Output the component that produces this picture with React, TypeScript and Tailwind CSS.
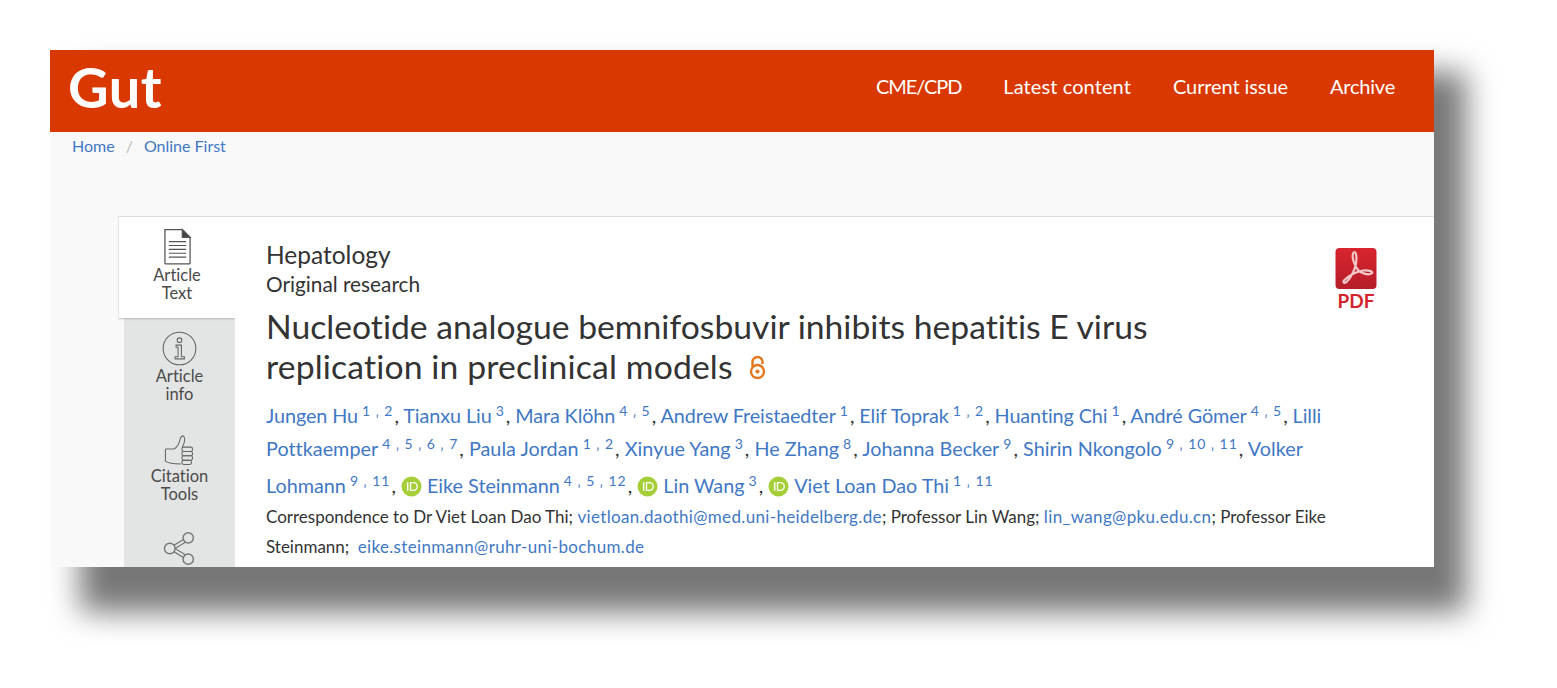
import React from "react";

const blue = "text-[#3f78c4]";
const mail = "text-[#3f78c4] tracking-[0.35px]";

function Sup({ t }: { t: string }) {
  return <sup className="text-[14px] leading-none relative top-[1px] align-super ml-[4px] mr-[1px] tracking-[1px]">{t}</sup>;
}

function Orcid() {
  return (
    <svg viewBox="0 0 22 22" className="inline-block w-[21px] h-[21px] align-[-4px] mr-[5px]">
      <circle cx="11" cy="11" r="10.5" fill="#a6ce39" />
      <path d="M7 6.5v9" stroke="#fff" strokeWidth="1.5" />
      <path d="M10 7h3a4 4 0 0 1 0 8h-3z" fill="none" stroke="#fff" strokeWidth="1.4" />
    </svg>
  );
}

function A({ n, s, id }: { n: string; s: string; id?: boolean }) {
  return (
    <>
      {id && <Orcid />}
      <span className={blue}>{n}</span>
      <span className={blue}><Sup t={s} /></span>
    </>
  );
}

function DocIcon() {
  return (
    <svg viewBox="0 0 30 38" className="w-[29px] h-[37px]" fill="none" stroke="#555" strokeWidth="1.3">
      <path d="M2 1.5h18l8 8v26.5a1 1 0 0 1-1 1H3a1 1 0 0 1-1-1z" />
      <path d="M20 1.5l8 8h-8z" fill="#444" />
      <path d="M6 14h18M6 18h18M6 22h18M6 26h18M6 30h18" strokeWidth="1.2" />
    </svg>
  );
}
function InfoIcon() {
  return (
    <svg viewBox="0 0 36 36" className="w-[35px] h-[35px]" fill="none" stroke="#666" strokeWidth="1.1">
      <circle cx="18" cy="18" r="16.8" />
      <circle cx="18" cy="9.5" r="2.4" />
      <path d="M14.5 14.5h5.5v12h3v2.2h-9.5v-2.2h3v-9.8h-2z" />
    </svg>
  );
}
function ThumbIcon() {
  return (
    <svg viewBox="0 0 30 32" className="w-[30px] h-[31px] ml-[-2px]" fill="none" stroke="#666" strokeWidth="1.1">
      <path d="M1 14.500h9c3-2 5-5.500 6-9.500.5-3 2.500-5 4-3.500 1.500 2 .5 7-1.500 11" />
      <path d="M1 14.500v12.500c3 2.500 10 3 16 3" />
      <rect x="18" y="12.500" width="11" height="4.500" rx="2" />
      <rect x="18" y="17" width="11" height="4.500" rx="2" />
      <rect x="18" y="21.500" width="11" height="4.500" rx="2" />
      <rect x="18" y="26" width="10" height="4.500" rx="2" />
    </svg>
  );
}
function ShareIcon() {
  return (
    <svg viewBox="0 0 34 36" className="w-[33px] h-[35px]" fill="none" stroke="#777" strokeWidth="1.500">
      <circle cx="26" cy="7" r="5.300" />
      <circle cx="26" cy="29" r="5.300" />
      <circle cx="7" cy="18" r="5.500" />
      <path d="M11.500 14.500l10-6M11.500 21.500l10 6M12.500 18l10.500-6.500M12.500 18l10.500 6.500" strokeWidth="1.300" />
    </svg>
  );
}
function PdfIcon() {
  return (
    <svg viewBox="0 0 42 42" className="w-[42px] h-[42px]">
      <defs>
        <linearGradient id="pdfg" x1="0" y1="0" x2="0" y2="1">
          <stop offset="0" stopColor="#d8252f" />
          <stop offset="1" stopColor="#b51e28" />
        </linearGradient>
      </defs>
      <rect x="0.500" y="0" width="41" height="41" rx="4" fill="url(#pdfg)" />
      <path
        d="M18 6c-1.500 4 2 12 5 16 3 3.500 11 6 14 3 1-2-4-3-9-2.500-6 .8-15 5-19 10-1.500 2 .5 3.500 3 1 4-4 8-12 9-18 .8-5 .5-11-1.500-11.500-.8 0-1.300.8-1.500 2z"
        fill="none"
        stroke="#f0c8c8"
        strokeWidth="2.200"
      />
    </svg>
  );
}

function Tab({ icon, a, b, cls }: { icon: React.ReactNode; a: string; b: string; cls: string }) {
  return (
    <div className={`flex flex-col items-center shrink-0 ${cls}`}>
      {icon}
      <div className="text-[16.500px] leading-[18px] text-[#4a4a4a] text-center mt-[1px]">
        {a}
        <br />
        {b}
      </div>
    </div>
  );
}

export default function App() {
  return (
    <div
      className="relative w-[1557px] h-[688px] bg-white overflow-hidden pt-[50px] pl-[50px] [font-variant-ligatures:none]"
      style={{ fontFamily: '"Lato", "Noto Sans", sans-serif' }}
    >
      <div className="absolute left-[80px] top-[72px] w-[1386px] h-[540px] bg-[#777777] blur-[15px]" />
      <div className="relative w-[1384px] h-[517px] bg-[#f9f9f9] overflow-hidden">
        <header className="h-[82px] bg-[#d93900] flex items-center justify-between pl-[18px] pr-[39px]">
          <div className="text-[56px] font-bold text-white leading-none tracking-[0.5px] mt-[-8px]">Gut</div>
          <nav className="flex gap-[42px] text-[20px] text-white mt-[-10px] tracking-[-0.1px]">
            <span className="tracking-[-1.1px]">CME/CPD</span>
            <span className="tracking-[0.1px]">Latest content</span>
            <span>Current issue</span>
            <span className="tracking-[-0.2px]">Archive</span>
          </nav>
        </header>
        <div className="h-[84px] pl-[22px] pt-[5px] text-[16px] leading-[18px] text-[#3f78c4] flex">
          <span>Home</span>
          <span className="text-[#bbb] ml-[11px] mr-[11px]">/</span>
          <span>Online First</span>
        </div>
        <main className="ml-[68px] h-[351px] border-t border-[#dcdcdc] flex overflow-hidden">
          <aside className="w-[117px] shrink-0 flex flex-col">
            <Tab icon={<DocIcon />} a="Article" b="Text" cls="h-[101px] pt-[11px] bg-white border-l border-[#e4e4e4] shadow-[0_1px_2px_rgba(0,0,0,0.2)] relative" />
            <div className="ml-[6px] flex-1 bg-[#e3e5e4] flex flex-col items-center">
              <Tab icon={<InfoIcon />} a="Article" b="info" cls="pt-[13px]" />
              <Tab icon={<ThumbIcon />} a="Citation" b="Tools" cls="pt-[32px]" />
              <div className="pt-[28px]">
                <ShareIcon />
              </div>
            </div>
          </aside>
          <section className="flex-1 relative bg-white pl-[31px] pt-[23px] text-[#333]">
            <div className="absolute left-[1100px] top-[31px] flex flex-col items-center w-[42px]">
              <PdfIcon />
              <div className="text-[19px] leading-[20px] font-bold text-[#d3242e] mt-[1px]">PDF</div>
            </div>
            <div className="text-[24.500px] leading-[30px]">Hepatology</div>
            <div className="text-[20.800px] leading-[28px]">Original research</div>
            <h1 className="text-[33.700px] leading-[40px] mt-[8px] w-[1000px]">
              Nucleotide analogue bemnifosbuvir inhibits hepatitis E virus
              <br />
              <span className="tracking-[0.15px]">replication in preclinical models</span>
              <svg viewBox="0 0 17 25" className="inline-block w-[17px] h-[25px] ml-[16px] align-[-1px]" fill="none" stroke="#e5781f" strokeWidth="2.400">
                <circle cx="8.500" cy="16.500" r="6.500" />
                <circle cx="8.500" cy="16.500" r="1.800" fill="#e5781f" strokeWidth="0.600" />
                <path d="M3.500 11.500V7a5 5 0 0 1 10 0v2" />
              </svg>
            </h1>
            <div className="mt-[13px] w-[1100px] text-[19.800px] leading-[33px] text-[#333]">
              <div className="tracking-[-0.08px]">
                <A n="Jungen Hu" s="1 ‚ 2" />, <A n="Tianxu Liu" s="3" />, <A n="Mara Klöhn" s="4 ‚ 5" />, <A n="Andrew Freistaedter" s="1" />, <A n="Elif Toprak" s="1 ‚ 2" />, <A n="Huanting Chi" s="1" />, <A n="André Gömer" s="4 ‚ 5" />, <span className={blue}>Lilli</span>
              </div>
              <div className="tracking-[0.03px]">
                <A n="Pottkaemper" s="4 ‚ 5 ‚ 6 ‚ 7" />, <A n="Paula Jordan" s="1 ‚ 2" />, <A n="Xinyue Yang" s="3" />, <A n="He Zhang" s="8" />, <A n="Johanna Becker" s="9" />, <A n="Shirin Nkongolo" s="9 ‚ 10 ‚ 11" />, <span className={blue}>Volker</span>
              </div>
              <div className="mt-[4px]">
                <A n="Lohmann" s="9 ‚ 11" />, <A id n="Eike Steinmann" s="4 ‚ 5 ‚ 12" />, <A id n="Lin Wang" s="3" />, <A id n="Viet Loan Dao Thi" s="1 ‚ 11" />
              </div>
            </div>
            <div className="text-[17px] leading-[30px] text-[#333] w-[1100px]">
              <div>
                Correspondence to Dr Viet Loan Dao Thi; <span className={mail}>vietloan.daothi@med.uni-heidelberg.de</span>; Professor Lin Wang; <span className={mail}>lin_wang@pku.edu.cn</span>; Professor Eike
              </div>
              <div>
                Steinmann; <span className={`${mail} ml-[4px]`}>eike.steinmann@ruhr-uni-bochum.de</span>
              </div>
            </div>
          </section>
        </main>
      </div>
    </div>
  );
}
